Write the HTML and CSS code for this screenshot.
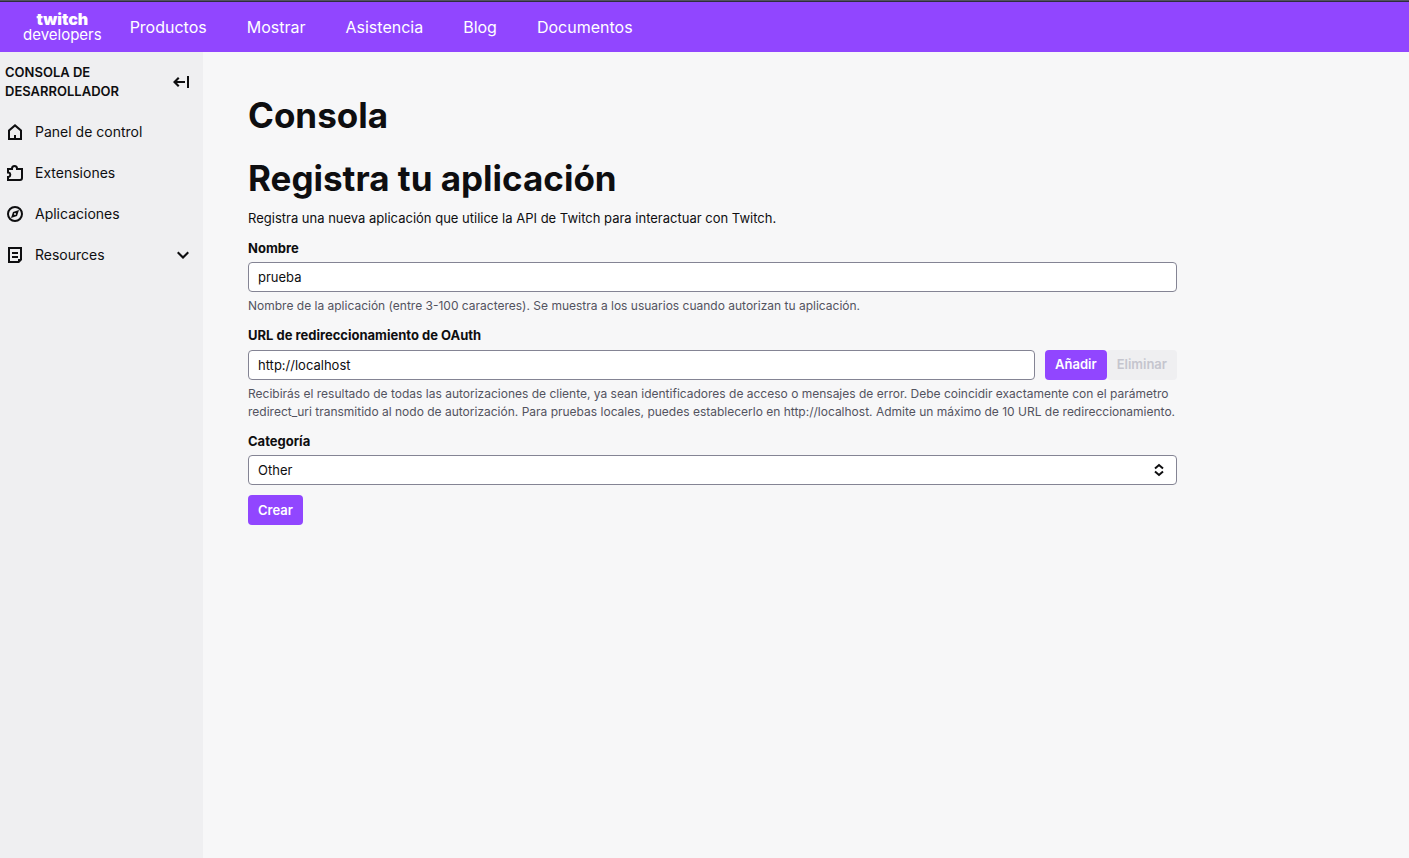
FILE: index.html
```html
<!DOCTYPE html>
<html lang="es">
<head>
<meta charset="utf-8">
<meta name="viewport" content="width=device-width, initial-scale=1">
<title>Consola - Twitch Developers</title>
<link rel="stylesheet" href="styles.css">
</head>
<body>
<header class="topbar">
  <a class="brand" href="#"><span class="brand-name">twitch</span><span class="brand-sub">developers</span></a>
  <nav class="topnav">
    <a href="#">Productos</a>
    <a href="#">Mostrar</a>
    <a href="#">Asistencia</a>
    <a href="#">Blog</a>
    <a href="#">Documentos</a>
  </nav>
</header>
<div class="shell">
  <aside class="sidebar">
    <div class="sidebar-head">
      <h2 class="sidebar-title">Consola de desarrollador</h2>
      <button class="icon-button" type="button" aria-label="Contraer">
        <svg class="icon" viewBox="0 0 20 20"><path d="M16 16V4h2v12h-2zM6 9l2.500-2.500L7 5l-5 5 5 5 1.500-1.500L6 11h8V9H6z"/></svg>
      </button>
    </div>
    <nav class="sidenav">
      <a class="sidenav-link" href="#">
        <svg class="icon" viewBox="0 0 20 20"><path fill-rule="evenodd" d="M10 2l7 6v10H3V8l7-6zm0 2.700L5 9v7h4v-3h2v3h4V9l-5-4.300z"/></svg>
        <span>Panel de control</span>
      </a>
      <a class="sidenav-link" href="#">
        <svg class="icon" viewBox="0 0 20 20"><path class="line" d="M3 6h4V5.500a2.500 2.500 0 0 1 5 0V6h5v9a2 2 0 0 1-2 2H3v-3h.5a2.300 2.300 0 0 0 0-4.500H3z"/></svg>
        <span>Extensiones</span>
      </a>
      <a class="sidenav-link" href="#">
        <svg class="icon" viewBox="0 0 20 20"><circle class="line" cx="10" cy="10" r="7"/><path fill-rule="evenodd" d="M14 6l-2 6-6 2 2-6 6-2zm-4 3a1 1 0 1 0 0 2 1 1 0 0 0 0-2z"/></svg>
        <span>Aplicaciones</span>
      </a>
      <a class="sidenav-link" href="#">
        <svg class="icon" viewBox="0 0 20 20"><path d="M7 7h6v2H7zM7 11h6v2H7z"/><path fill-rule="evenodd" d="M3 2h14v13l-3 3H3V2zm2 2v12h8v-2h2V4H5z"/></svg>
        <span>Resources</span>
        <svg class="icon chevron" viewBox="0 0 20 20"><path d="M14.500 6.500L10 11 5.500 6.500 4 8l6 6 6-6-1.500-1.500z"/></svg>
      </a>
    </nav>
  </aside>
  <main class="main">
    <form class="content">
      <h1 class="heading">Consola</h1>
      <h2 class="heading">Registra tu aplicación</h2>
      <p class="intro">Registra una nueva aplicación que utilice la API de Twitch para interactuar con Twitch.</p>
      <div class="field">
        <label class="label" for="name">Nombre</label>
        <input class="control" id="name" type="text" value="prueba">
        <p class="hint">Nombre de la aplicación (entre 3-100 caracteres). Se muestra a los usuarios cuando autorizan tu aplicación.</p>
      </div>
      <div class="field">
        <label class="label" for="redirect">URL de redireccionamiento de OAuth</label>
        <div class="control-row">
          <input class="control" id="redirect" type="text" value="http://localhost">
          <div class="actions">
            <button class="button" type="button">Añadir</button>
            <button class="button" type="button" disabled>Eliminar</button>
          </div>
        </div>
        <p class="hint">Recibirás el resultado de todas las autorizaciones de cliente, ya sean identificadores de acceso o mensajes de error. Debe coincidir exactamente con el parámetro redirect_uri transmitido al nodo de autorización. Para pruebas locales, puedes establecerlo en http://localhost. Admite un máximo de 10 URL de redireccionamiento.</p>
      </div>
      <div class="field field-last">
        <label class="label" for="category">Categoría</label>
        <div class="select-wrap">
          <select class="control" id="category"><option>Other</option></select>
          <svg class="icon select-arrows" viewBox="0 0 20 20"><path class="line" d="M6 8.500L10 5l4 3.500M6 11.500l4 3.500 4-3.500"/></svg>
        </div>
      </div>
      <button class="button" type="submit">Crear</button>
    </form>
  </main>
</div>
</body>
</html>
```
FILE: styles.css
```css
* { box-sizing: border-box; }

body {
  margin: 0;
  min-height: 100vh;
  display: flex;
  flex-direction: column;
  background: #f7f7f8;
  color: #0e0e10;
  font-family: Inter, "Liberation Sans", sans-serif;
  font-size: 13px;
  line-height: 1.5;
}

h1, h2, p { margin: 0; }
a { color: inherit; text-decoration: none; }
button, input, select { font: inherit; color: inherit; }

.icon { width: 20px; height: 20px; flex: none; display: block; fill: #0e0e10; }
.line { fill: none; stroke: #0e0e10; stroke-width: 2; }

.topbar {
  display: flex;
  align-items: center;
  height: 52px;
  padding-left: 23px;
  gap: 28px;
  border-top: 1px solid #53535f;
  box-shadow: inset 0 1px #2d2d3d;
  background: #9146ff;
  color: #fff;
}

.brand { display: flex; flex-direction: column; align-items: center; }
.brand-name { font-size: 16px; font-weight: 900; line-height: 15px; }
.brand-sub { font-size: 15px; font-weight: 400; line-height: 15px; }
.topnav { display: flex; gap: 40px; font-size: 16px; font-weight: 400; }

.shell { display: flex; flex: 1; }

.sidebar { width: 203px; flex: none; background: #efeff1; }
.sidebar-head {
  display: flex;
  align-items: center;
  justify-content: space-between;
  padding: 11px 12px 10px 5px;
}
.sidebar-title {
  width: 130px;
  font-size: 13px;
  font-weight: 600;
  line-height: 19px;
  text-transform: uppercase;
}
.icon-button { padding: 0; border: 0; background: none; }
.sidenav-link {
  display: flex;
  align-items: center;
  gap: 10px;
  height: 41px;
  padding: 0 10px 0 5px;
  font-size: 14px;
}
.chevron { margin-left: auto; }

.main { flex: 1; min-width: 0; padding: 42px 45px; }
.content { max-width: 929px; }
.heading {
  margin-bottom: 20px;
  font-size: 35px;
  font-weight: 700;
  line-height: 43px;
}
.heading + .intro { margin-top: -11px; }
.intro { margin-bottom: 10px; }

.field { margin-bottom: 11px; }
.field-last { margin-bottom: 10px; }
.label { display: block; margin-bottom: 4px; font-weight: 700; }
.control {
  display: block;
  width: 100%;
  height: 30px;
  padding: 0 9px;
  border: 1px solid #848494;
  border-radius: 4px;
  background: #fff;
}
.control-row { display: flex; gap: 10px; }
.actions { display: flex; flex: none; }
.hint { margin-top: 5px; color: #53535f; font-size: 12px; }

.button {
  height: 30px;
  padding: 1px 10px 0;
  border: 0;
  border-radius: 4px;
  background: #9146ff;
  color: #fff;
  font-weight: 600;
}
.button:disabled { background: #efeff1; color: #c5c5ce; }

.select-wrap { position: relative; }
select.control { padding-top: 1px; appearance: none; }
.select-arrows {
  position: absolute;
  top: 5px;
  right: 8px;
  pointer-events: none;
}
```
